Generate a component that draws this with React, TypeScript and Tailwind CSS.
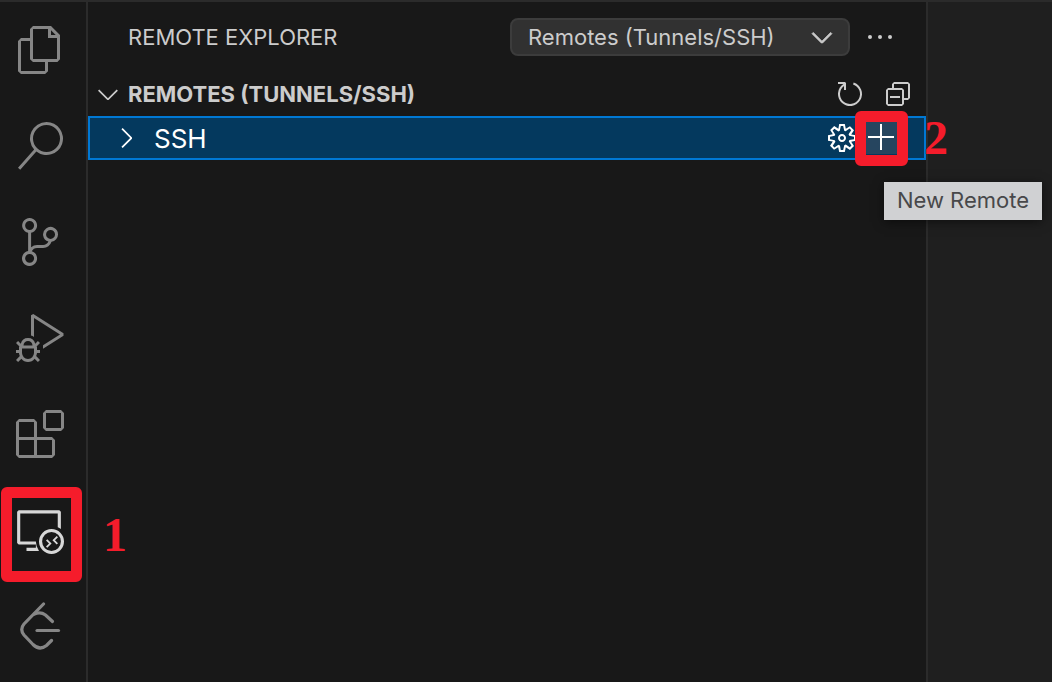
import type { ReactNode } from "react";
import {
  VscAdd,
  VscChevronDown,
  VscChevronRight,
  VscCollapseAll,
  VscDebugAlt,
  VscExtensions,
  VscFiles,
  VscGear,
  VscRefresh,
  VscRemoteExplorer,
  VscSearch,
  VscSourceControl,
} from "react-icons/vsc";

function LeetCodeIcon() {
  return (
    <svg viewBox="0 0 48 48" className="size-12" fill="none" stroke="currentColor" strokeWidth="3.2" strokeLinecap="round">
      <path d="M27.500 2 L8 22 Q3.500 27.500 8 33 L17 42.500 Q23.500 49 30.500 43.500 L35.500 38.500" />
      <path d="M18.500 12 Q24.500 9.500 29.500 13 L36.500 19.500" />
      <path d="M21 28.500 H42.500" />
    </svg>
  );
}

function EllipsisIcon() {
  return (
    <svg viewBox="0 0 32 32" className="size-8" fill="currentColor">
      <circle cx="6" cy="16" r="2" />
      <circle cx="16" cy="16" r="2" />
      <circle cx="26" cy="16" r="2" />
    </svg>
  );
}

type Activity = { label: string; icon: ReactNode; active?: boolean };

const activities: Activity[] = [
  { label: "Explorer", icon: <VscFiles size={48} /> },
  { label: "Search", icon: <VscSearch size={48} /> },
  { label: "Source Control", icon: <VscSourceControl size={48} /> },
  { label: "Run and Debug", icon: <VscDebugAlt size={48} /> },
  { label: "Extensions", icon: <VscExtensions size={48} /> },
  { label: "Remote Explorer", icon: <VscRemoteExplorer size={48} />, active: true },
  { label: "LeetCode", icon: <LeetCodeIcon /> },
];

function ActivityBar() {
  return (
    <nav aria-label="Activity bar" className="flex w-22 shrink-0 flex-col border-r-2 border-[#2b2b2b] pr-1.5">
      {activities.map((item) => (
        <div key={item.label} className="relative">
          <button
            type="button"
            aria-label={item.label}
            className={`flex h-24 w-full items-center justify-center ${item.active ? "text-[#d7d7d7]" : "text-[#868686]"}`}
          >
            {item.icon}
          </button>
          {item.active && (
            <>
              <span className="pointer-events-none absolute top-[5px] left-px h-[95px] w-[81px] rounded-md border-11 border-[#f51c2b]" />
              <Marker className="top-[25px] left-[103px]">1</Marker>
            </>
          )}
        </div>
      ))}
    </nav>
  );
}

function Marker({ className, children }: { className: string; children: ReactNode }) {
  return (
    <span
      className={`pointer-events-none absolute z-10 font-['Liberation_Serif',serif] text-[48px] leading-[56px] font-bold text-[#f51c2b] ${className}`}
    >
      {children}
    </span>
  );
}

function IconButton({ label, children }: { label: string; children: ReactNode }) {
  return (
    <button type="button" aria-label={label} className="flex size-8 shrink-0 items-center justify-center">
      {children}
    </button>
  );
}

function RemoteExplorer() {
  return (
    <aside className="min-w-0 flex-1 border-r-2 border-[#2b2b2b] text-[22px]">
      <header className="flex h-[70px] items-center pr-[30px] pl-10">
        <h1 className="flex-1 truncate">REMOTE EXPLORER</h1>
        <div className="relative w-[340px]">
          <select
            aria-label="Remote type"
            className="h-[38px] w-full appearance-none rounded-lg border-2 border-[#3c3c3c] bg-[#313131] pr-12 pl-4"
          >
            <option>Remotes (Tunnels/SSH)</option>
          </select>
          <VscChevronDown
            size={32}
            strokeWidth={0.4}
            className="pointer-events-none absolute top-[3px] right-3"
          />
        </div>
        <div className="ml-3.5 flex">
          <IconButton label="More actions">
            <EllipsisIcon />
          </IconButton>
        </div>
      </header>
      <div className="flex h-11 items-center pr-3 pl-1">
        <button type="button" className="flex flex-1 items-center gap-1 font-bold">
          <VscChevronDown size={32} />
          REMOTES (TUNNELS/SSH)
        </button>
        <div className="flex gap-4">
          <IconButton label="Refresh">
            <VscRefresh size={32} />
          </IconButton>
          <IconButton label="Collapse all">
            <VscCollapseAll size={32} />
          </IconButton>
        </div>
      </div>
      <div className="flex h-11 items-center border-2 border-[#0078d4] bg-[#04395e] pr-[26px] pl-5 text-[26px] text-white">
        <button type="button" className="flex flex-1 items-center gap-3">
          <VscChevronRight size={32} />
          SSH
        </button>
        <div className="flex gap-2">
          <IconButton label="Configure">
            <VscGear size={32} />
          </IconButton>
          <div className="relative">
            <button
              type="button"
              aria-label="New Remote"
              aria-describedby="new-remote-tip"
              className="flex size-8 items-center justify-center bg-[#26455f]"
            >
              <VscAdd size={32} />
            </button>
            <span className="pointer-events-none absolute -top-[11px] -left-[11px] h-[55px] w-[53px] rounded-md border-11 border-[#f51c2b]" />
            <Marker className="-top-3 left-[58px]">2</Marker>
            <span
              id="new-remote-tip"
              role="tooltip"
              className="absolute top-[60px] left-[18px] z-10 h-[38px] w-[158px] bg-[#d0d1d3] text-center text-[22px] leading-[36px] whitespace-nowrap text-[#48484a] shadow-[0_2px_10px_rgba(0,0,0,0.5)]"
            >
              New Remote
            </span>
          </div>
        </div>
      </div>
    </aside>
  );
}

export default function App() {
  return (
    <div className="flex min-h-screen overflow-hidden border-t-2 border-[#2b2b2b] bg-[#181818] font-['Inter','Liberation_Sans',sans-serif] text-[#cccccc]">
      <ActivityBar />
      <RemoteExplorer />
      <main aria-label="Editor" className="w-[124px] shrink-0 bg-[#1f1f1f]" />
    </div>
  );
}
